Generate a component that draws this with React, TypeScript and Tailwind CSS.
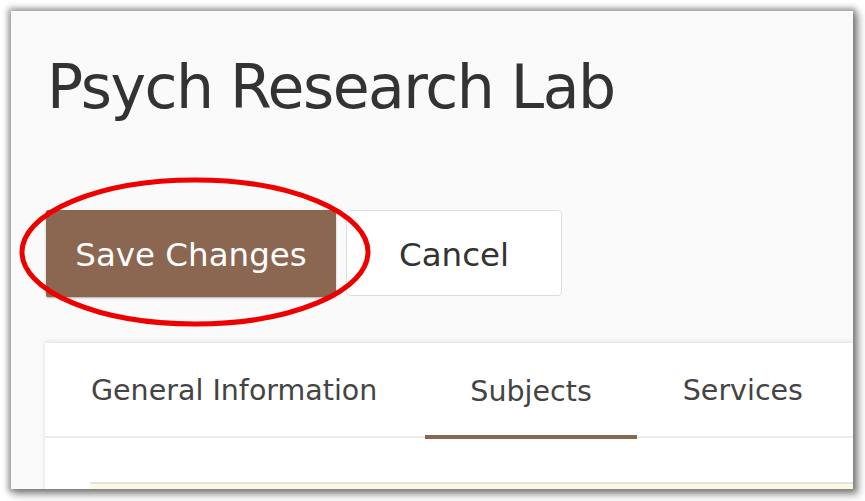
import React from 'react';

const tabs = ['General Information', 'Subjects', 'Services'];

export default function App() {
  const active = 1;

  return (
    <div className="w-[865px] h-[501px] bg-white relative overflow-hidden" style={{ fontFamily: '"DejaVu Sans", Verdana, sans-serif' }}>
      {/* screenshot frame */}
      <div className="absolute left-[11px] top-[11px] w-[842px] h-[478px] bg-[#fafafa] overflow-hidden shadow-[0_0_6px_3px_rgba(0,0,0,0.35),4px_4px_8px_2px_rgba(0,0,0,0.3)]">
        <div className="pl-[36px] pt-[40px]">
          <h1 className="text-[60px] leading-[72px] text-[#333333] font-normal tracking-[-1.5px]">Psych Research Lab</h1>

          <div className="flex gap-[10px] mt-[87px] -ml-[1px]">
            <button className="w-[290px] h-[87px] pt-[4px] bg-[#8b6650] text-white text-[32.5px] rounded-[2px] shadow-[0_1px_2px_rgba(0,0,0,0.3)]">
              Save Changes
            </button>
            <button className="w-[216px] h-[86px] pt-[4px] bg-white text-[#333333] text-[32.5px] border border-[#dddddd] rounded-[4px]">
              Cancel
            </button>
          </div>

          <div className="mt-[46px] -ml-[2px] bg-white shadow-[0_-1px_5px_rgba(0,0,0,0.12)] h-[200px]">
            <div className="flex border-b-2 border-[#ececec] h-[95px]">
              {tabs.map((t, i) => (
                <div
                  key={t}
                  className={
                    i === active
                      ? 'px-[45px] flex items-center text-[28.5px] text-[#444444] border-b-4 border-[#8b6650] -mb-[3px] pt-[7px]'
                      : 'pl-[46px] pr-[48px] pt-[4px] flex items-center text-[28.5px] text-[#444444]'
                  }
                >
                  {t}
                </div>
              ))}
            </div>
            <div className="pl-[45px] pt-[44px]">
              <div className="h-[20px] bg-[#fdf8e3] border-t-2 border-[#e3e3e3]" />
            </div>
          </div>
        </div>
      </div>

      {/* red annotation ellipse */}
      <svg className="absolute left-0 top-0 pointer-events-none" width="865" height="501">
        <ellipse cx="195" cy="252" rx="173" ry="72" fill="none" stroke="#ee0000" strokeWidth="5" />
      </svg>
    </div>
  );
}
